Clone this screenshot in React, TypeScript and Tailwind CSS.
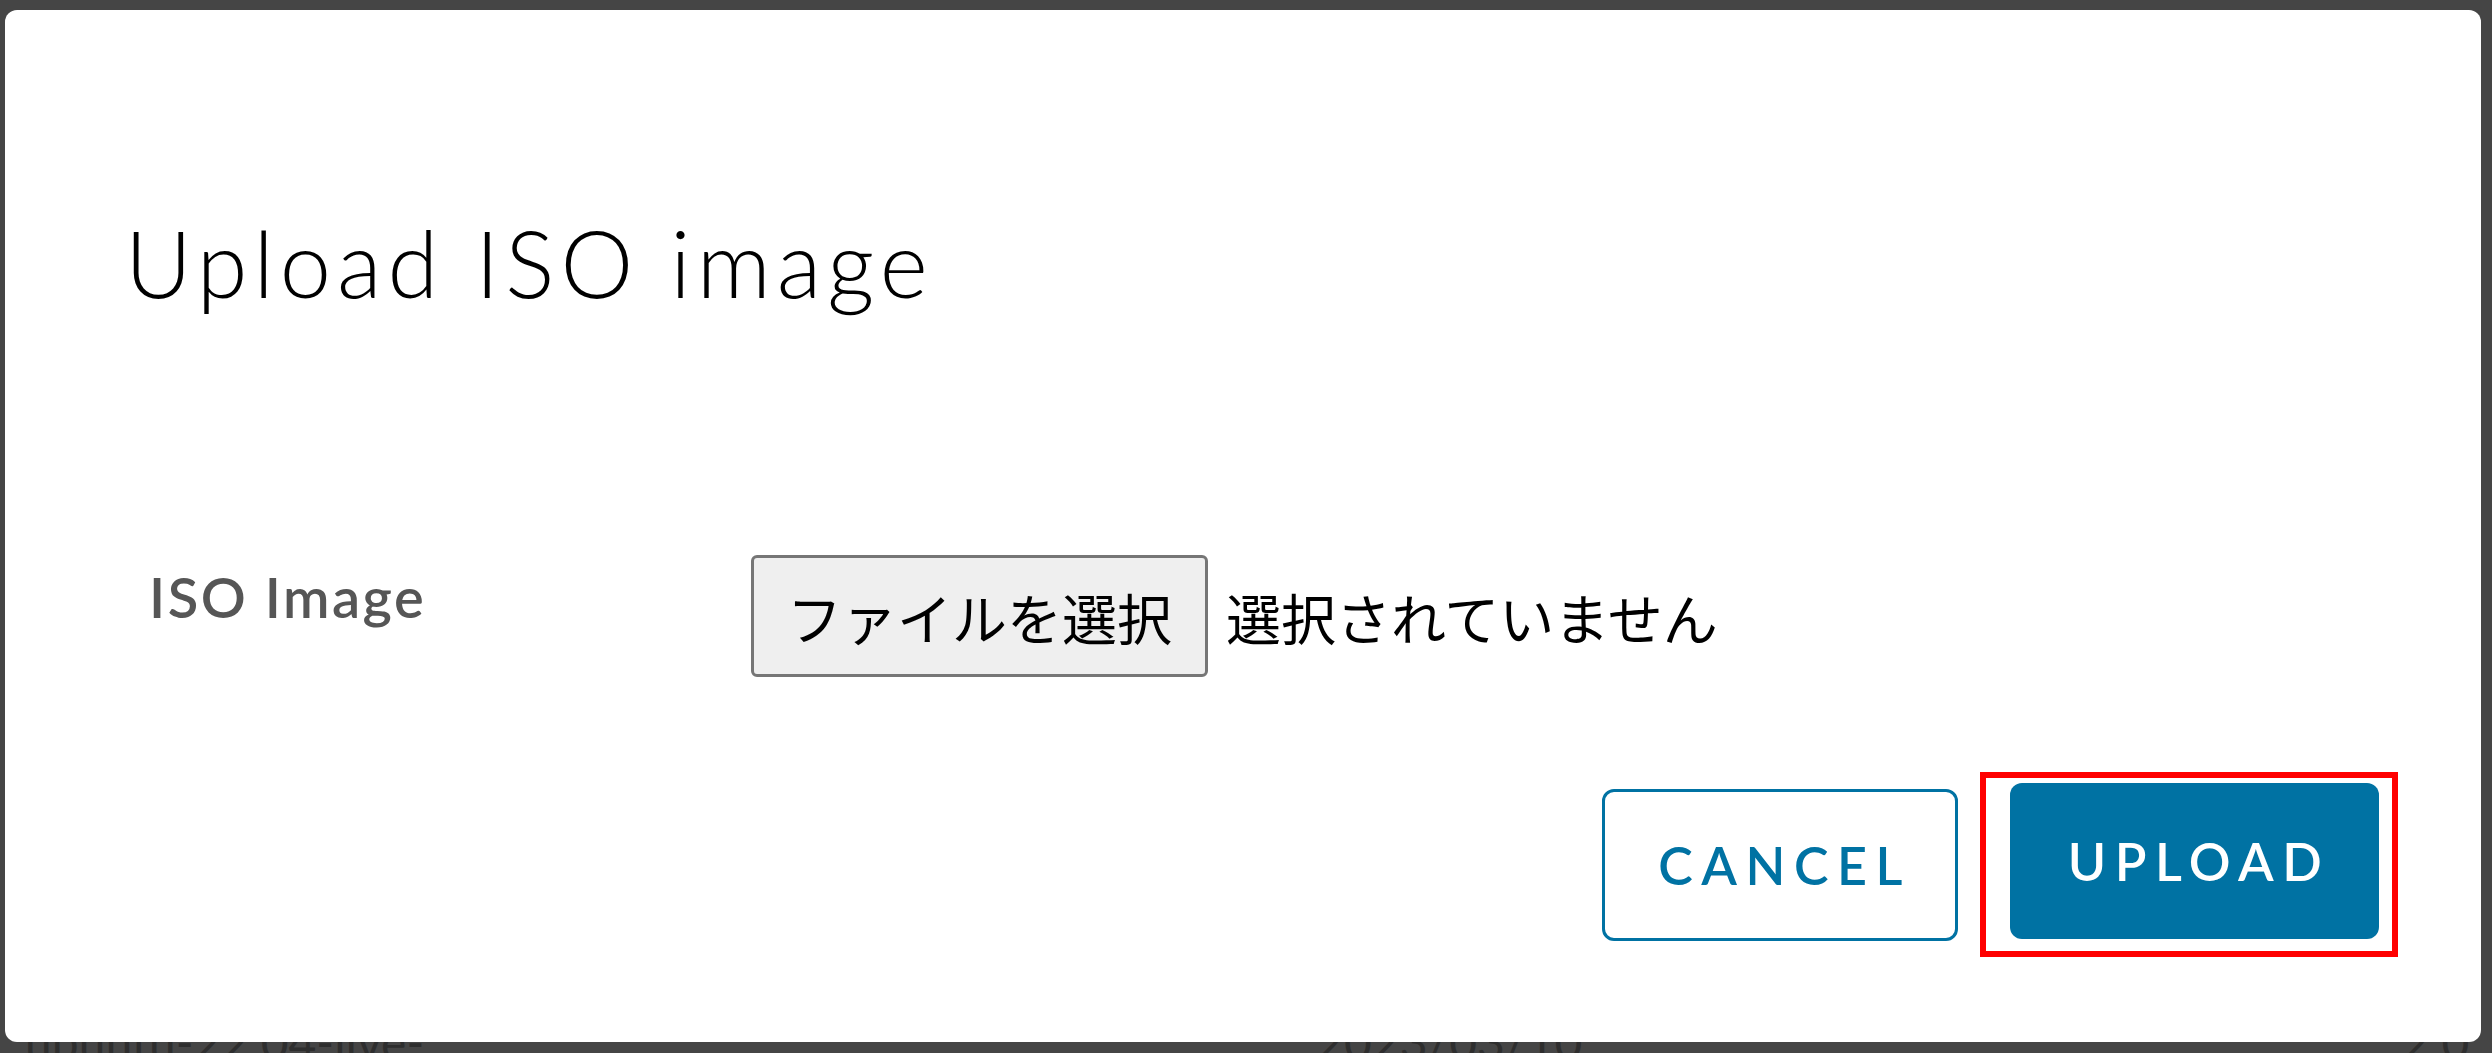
export default function App() {
  return (
    <div className="h-[1053px] w-[2492px] overflow-hidden bg-[#454545] pl-[5px] pt-[10px] font-['Lato',sans-serif]">
      <div className="flex h-[1032px] w-[2476px] flex-col rounded-[12px] bg-white pl-[120px] pr-[83px] pt-[207px]">
        <h3 className="text-[92px] font-light leading-none tracking-[6px] text-black">
          Upload ISO image
        </h3>

        <div className="mt-[246px] flex items-start">
          <label className="ml-[24px] mt-[14px] w-[602px] text-[56px] font-semibold leading-none tracking-[2.5px] text-[#565656]">
            ISO Image
          </label>
          <div className="flex items-center font-['Noto_Sans_CJK_JP',sans-serif] text-[55px] text-black">
            <span className="flex h-[122px] items-center rounded-[6px] border-[3px] border-[#767676] bg-[#efefef] px-[33px]">
              ファイルを選択
            </span>
            <span className="ml-[18px]">選択されていません</span>
          </div>
        </div>

        <div className="mt-[95px] flex items-center justify-end">
          <button className="flex h-[152px] w-[356px] items-center justify-center rounded-[12px] border-[3px] border-[#0072a3] bg-white pl-[9px] text-[52px] font-semibold tracking-[8.5px] text-[#0072a3]">
            CANCEL
          </button>
          <div className="ml-[22px] border-[6px] border-[#ff0000] pb-[12px] pl-[24px] pr-[13px] pt-[5px]">
            <button className="flex h-[156px] w-[369px] items-center justify-center rounded-[12px] bg-[#0072a3] pl-[9px] text-[52px] font-semibold tracking-[8.5px] text-white">
              UPLOAD
            </button>
          </div>
        </div>
      </div>

      <div className="flex h-[11px] items-start overflow-hidden text-[48px] leading-none text-[#2e2e2e]">
        <span className="ml-[20px] mt-[-24px]">ubuntu-22.04-live-server-amd64.iso</span>
        <span className="ml-[820px] mt-[-24px]">2023/03/10</span>
        <span className="ml-[820px] mt-[-24px]">2.0 GB</span>
      </div>
    </div>
  );
}
